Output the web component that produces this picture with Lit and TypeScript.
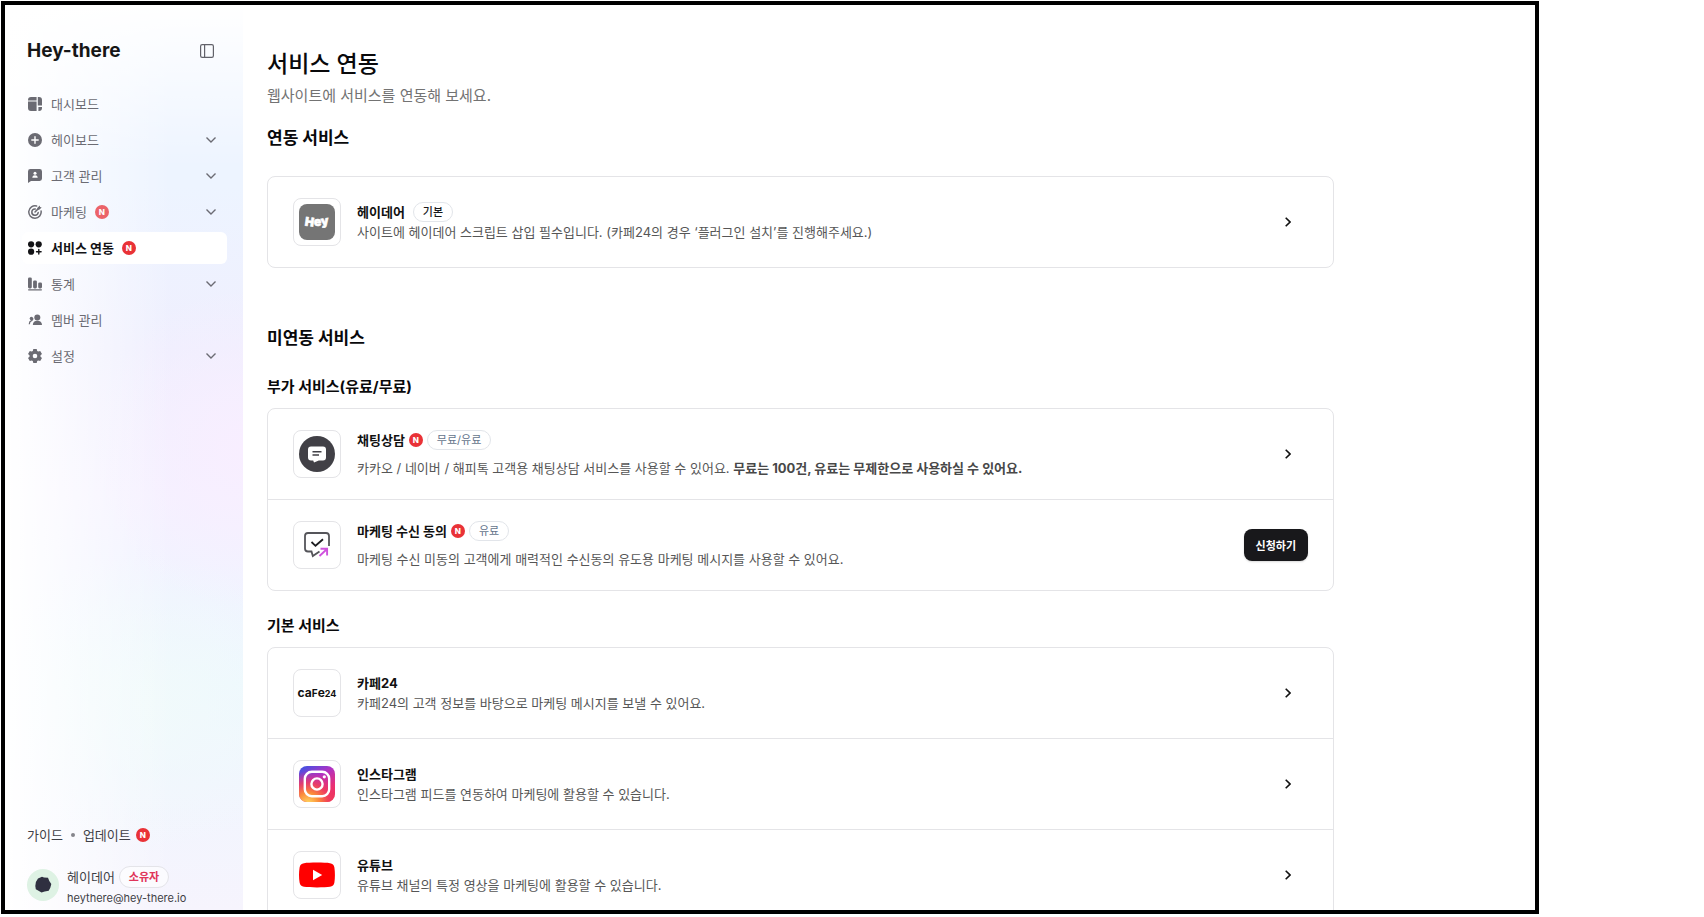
import { LitElement, html, svg, css, nothing, TemplateResult } from "lit";
import { customElement, property } from "lit/decorators.js";
import { classMap } from "lit/directives/class-map.js";

interface NavItem {
  label: string;
  icon: TemplateResult;
  isNew?: boolean;
  expandable?: boolean;
  active?: boolean;
}

interface Service {
  name: string;
  description: string;
  strong?: string;
  logo: TemplateResult;
  isNew?: boolean;
  tag?: string;
  tagDark?: boolean;
  action?: string;
}

const navIcons = {
  dashboard: svg`
    <path d="M3 0h5.6v3.4H0V3a3 3 0 0 1 3-3zM0 4.6h8.6V14H3a3 3 0 0 1-3-3z"/>
    <path d="M9.800 0H11a3 3 0 0 1 3 3v5.600H9.800zM10.400 10H14v1a3 3 0 0 1-3 3h-.6z"/>`,
  plus: svg`
    <circle cx="7" cy="7" r="7"/>
    <path d="M7 3.800v6.400M3.800 7h6.400" stroke="#fff" stroke-width="1.400" stroke-linecap="round"/>`,
  customer: svg`
    <path d="M2.400 0h9.200A2.400 2.400 0 0 1 14 2.400v7.200a2.400 2.400 0 0 1-2.400 2.400H3L0 14V2.400A2.400 2.400 0 0 1 2.400 0z"/>
    <circle cx="7" cy="4.300" r="1.500" fill="#fff"/>
    <path d="M4.300 8.700c0-1.700 1.200-2.500 2.700-2.500s2.700.8 2.700 2.500z" fill="#fff"/>`,
  target: svg`
    <g fill="none" stroke="currentColor" stroke-width="1.500" stroke-linecap="round">
      <path d="M8.600 1A6.200 6.200 0 1 0 13.100 6"/>
      <path d="M7.300 3.900A3.200 3.200 0 1 0 10.200 7.500"/>
      <path d="M7 7l3.600-3.600"/>
    </g>
    <path d="M9.300 2.900L11.700.4l.4 1.600 1.600.4-2.500 2.400H9.300z"/>`,
  services: svg`
    <circle cx="3.100" cy="3.300" r="3.100"/><circle cx="10.700" cy="3.300" r="3.100"/><circle cx="3.100" cy="10.700" r="3.100"/>
    <path d="M10.800 8.400v4.600M8.500 10.700h4.600" stroke="currentColor" stroke-width="1.400" stroke-linecap="round"/>`,
  stats: svg`
    <rect x="0" y="0.400" width="3.800" height="11" rx="1.400"/>
    <rect x="5.100" y="3.400" width="3.800" height="8" rx="1.400"/>
    <rect x="10.200" y="5.400" width="3.800" height="6" rx="1.400"/>
    <rect x="0" y="12.200" width="14" height="1.200" rx=".6"/>`,
  members: svg`
    <circle cx="9.300" cy="4.500" r="3"/>
    <path d="M4.800 11.900c0-2.600 1.700-4.200 4.500-4.200s4.700 1.600 4.700 4.200z"/>
    <circle cx="3.400" cy="5.500" r="1.700"/>
    <path d="M1.300 11.300c0-2 .7-3 2.200-3.600 1-.5 1.500-1.200 1.300-2.400" fill="none" stroke="currentColor" stroke-width="1.300"/>`,
  settings: svg`
    <path fill-rule="evenodd" d="M5.300 0h3.400l.5 1.900 1 .6 2-.6L14 4.900l-1.500 1.400v1.400L14 9.100l-1.800 3-2-.6-1 .6-.5 1.900H5.300l-.5-1.900-1-.6-2 .6L0 9.100l1.500-1.400V6.300L0 4.900l1.800-3 2 .6 1-.6zM7 4.700a2.300 2.300 0 1 0 0 4.600 2.300 2.300 0 0 0 0-4.600z"/>`,
};

const logos = {
  hey: html`<svg viewBox="0 0 36 36" aria-hidden="true">
    <rect width="36" height="36" rx="8" fill="#757575"/>
    <text x="5.500 15 22.500" y="21.500 22 21.500" rotate="8 0 -8" fill="#fff" stroke="#fff" stroke-width=".6"
      font-family="Inter, sans-serif" font-weight="900" font-size="12">Hey</text>
  </svg>`,
  chat: html`<svg viewBox="0 0 36 36" aria-hidden="true">
    <circle cx="18" cy="18" r="18" fill="#414046"/>
    <path d="M12 10.500h12a3 3 0 0 1 3 3v8a3 3 0 0 1-3 3h-4.200L15 26.500l-.8-2H12a3 3 0 0 1-3-3v-8a3 3 0 0 1 3-3z" fill="#fff"/>
    <path d="M13.500 15.800h9M13.500 19h6.500" stroke="#414046" stroke-width="1.500"/>
  </svg>`,
  consent: html`<svg viewBox="0 0 36 36" fill="none" aria-hidden="true">
    <path d="M30 19V9c0-2-1-3-3-3H9C7 6 6 7 6 9v12.500c0 2 1 3 3 3h3.500l1.300 4.500 6.700-4.500" stroke="#55555a" stroke-width="1.800"/>
    <path d="M12.500 15l4 3.800 7.500-6.600" stroke="#1d1d20" stroke-width="1.800"/>
    <path d="M20.500 29l7-6.500M21.500 21.800h6.600v6.600" stroke="#cf52dd" stroke-width="1.900"/>
  </svg>`,
  cafe: html`<svg class="wide" viewBox="0 0 46 36" aria-hidden="true">
    <text x="23" y="22" text-anchor="middle" fill="#111" font-family="Inter, sans-serif" font-weight="700">
      <tspan font-size="12">ca</tspan><tspan font-size="10">F</tspan><tspan font-size="12">e</tspan><tspan font-size="9">24</tspan>
    </text>
  </svg>`,
  instagram: html`<svg viewBox="0 0 36 36" aria-hidden="true">
    <defs>
      <linearGradient id="ig-base" x1=".2" y1="0" x2=".8" y2="1">
        <stop offset="0" stop-color="#4a4fe0"/><stop offset=".35" stop-color="#b032c4"/>
        <stop offset=".75" stop-color="#ee2f6e"/><stop offset="1" stop-color="#f0324f"/>
      </linearGradient>
      <radialGradient id="ig-glow" cx=".25" cy="1.050" r=".9">
        <stop offset="0" stop-color="#ffdc62"/><stop offset=".35" stop-color="#fb8a3a"/>
        <stop offset=".65" stop-color="#f0405a" stop-opacity=".8"/><stop offset="1" stop-color="#e03080" stop-opacity="0"/>
      </radialGradient>
    </defs>
    <rect width="36" height="36" rx="8" fill="url(#ig-base)"/>
    <rect width="36" height="36" rx="8" fill="url(#ig-glow)"/>
    <rect x="5.800" y="5.800" width="24.400" height="24.400" rx="7" fill="none" stroke="#fff" stroke-width="2.400"/>
    <circle cx="18" cy="18" r="5.600" fill="none" stroke="#fff" stroke-width="2.400"/>
    <circle cx="25.300" cy="10.800" r="1.600" fill="#fff"/>
  </svg>`,
  youtube: html`<svg viewBox="0 0 36 36" aria-hidden="true">
    <path d="M5 6.200c5-.8 21-.8 26 0 2.500.4 4 1.600 4.400 4.200.7 4.500.7 10.700 0 15.200-.4 2.600-1.900 3.800-4.400 4.200-5 .8-21 .8-26 0-2.500-.4-4-1.600-4.400-4.200-.8-4.500-.8-10.700 0-15.200C1 7.800 2.500 6.600 5 6.200z" fill="#f00"/>
    <path d="M14 12.800v10.400l9.200-5.200z" fill="#fff"/>
  </svg>`,
};

const NAV: NavItem[] = [
  { label: "대시보드", icon: navIcons.dashboard },
  { label: "헤이보드", icon: navIcons.plus, expandable: true },
  { label: "고객 관리", icon: navIcons.customer, expandable: true },
  { label: "마케팅", icon: navIcons.target, expandable: true, isNew: true },
  { label: "서비스 연동", icon: navIcons.services, isNew: true, active: true },
  { label: "통계", icon: navIcons.stats, expandable: true },
  { label: "멤버 관리", icon: navIcons.members },
  { label: "설정", icon: navIcons.settings, expandable: true },
];

const CONNECTED: Service[] = [
  {
    name: "헤이데어",
    description: "사이트에 헤이데어 스크립트 삽입 필수입니다. (카페24의 경우 ‘플러그인 설치’를 진행해주세요.)",
    logo: logos.hey,
    tag: "기본",
    tagDark: true,
  },
];

const ADDONS: Service[] = [
  {
    name: "채팅상담",
    description: "카카오 / 네이버 / 해피톡 고객용 채팅상담 서비스를 사용할 수 있어요. ",
    strong: "무료는 100건, 유료는 무제한으로 사용하실 수 있어요.",
    logo: logos.chat,
    isNew: true,
    tag: "무료/유료",
  },
  {
    name: "마케팅 수신 동의",
    description: "마케팅 수신 미동의 고객에게 매력적인 수신동의 유도용 마케팅 메시지를 사용할 수 있어요.",
    logo: logos.consent,
    isNew: true,
    tag: "유료",
    action: "신청하기",
  },
];

const BASIC: Service[] = [
  { name: "카페24", description: "카페24의 고객 정보를 바탕으로 마케팅 메시지를 보낼 수 있어요.", logo: logos.cafe },
  { name: "인스타그램", description: "인스타그램 피드를 연동하여 마케팅에 활용할 수 있습니다.", logo: logos.instagram },
  { name: "유튜브", description: "유튜브 채널의 특정 영상을 마케팅에 활용할 수 있습니다.", logo: logos.youtube },
];

@customElement("new-badge")
class NewBadge extends LitElement {
  static styles = css`
    :host {
      display: block;
      flex: none;
      width: 14px;
      height: 14px;
      border-radius: 7px;
      background: #e93237;
      color: #fff;
      font-size: 8px;
      line-height: 14px;
      font-weight: 800;
      text-align: center;
    }
  `;
  render() {
    return html`N`;
  }
}

@customElement("side-bar")
class SideBar extends LitElement {
  static styles = css`
    :host {
      display: flex;
      flex-direction: column;
      box-sizing: border-box;
      padding: 29px 16px 2px 17px;
      background:
        linear-gradient(to bottom, #fff 0, rgba(255, 255, 255, 0) 18%),
        linear-gradient(to right, #fff 0, rgba(255, 255, 255, 0) 70%),
        radial-gradient(150px 160px at 100% 49%, #f8eeff, rgba(248, 238, 255, 0)),
        radial-gradient(170px 150px at 60% 77%, #f1fafb, rgba(241, 250, 251, 0)),
        linear-gradient(to bottom, #edf4ff 20%, #efeffe 38%, #f4f1ff 54%, #f0f4ff 66%, #edf8fe 75%, #f1f5fe 86%, #f6f4fd);
      color: #6b6b73;
      font-size: 13px;
      line-height: 20px;
    }
    a, button { font: inherit; color: inherit; text-decoration: none; }
    button { padding: 0; border: 0; background: none; cursor: pointer; }
    .head {
      display: flex;
      align-items: center;
      justify-content: space-between;
      padding: 0 13px 0 5px;
      height: 34px;
    }
    .logo { color: #161616; font-size: 19px; font-weight: 700; line-height: 24px; }
    .head svg { display: block; }
    .nav { display: flex; flex-direction: column; gap: 4px; margin-top: 20px; }
    .item {
      display: flex;
      align-items: center;
      gap: 8px;
      height: 32px;
      padding: 0 11px 0 6px;
      border-radius: 6px;
    }
    .item.active { background: #fff; color: #131316; font-weight: 700; }
    .item.muted new-badge { opacity: 0.75; }
    .item svg { display: block; flex: none; }
    .icon { margin-right: 1px; }
    .chevron { margin-left: auto; }
    .links {
      display: flex;
      align-items: center;
      gap: 5px;
      margin-top: auto;
      padding-left: 5px;
      color: #3f3f46;
    }
    .dot { width: 4px; height: 4px; margin: 0 3px; border-radius: 2px; background: #85858c; }
    .profile { display: flex; align-items: center; gap: 8px; margin-top: 21px; padding-left: 5px; color: #3f3f46; }
    .profile > svg { display: block; flex: none; margin-bottom: 4px; }
    .who { display: flex; align-items: center; gap: 4px; }
    .role {
      box-sizing: border-box;
      height: 22px;
      padding: 0 9px;
      border: 1px solid #e4e4e9;
      border-radius: 11px;
      background: rgba(255, 255, 255, 0.6);
      color: #e0355a;
      font-size: 11px;
      font-weight: 700;
    }
    .mail { display: block; font-size: 11px; }
  `;

  render() {
    return html`
      <div class="head">
        <a class="logo" href="#">Hey-there</a>
        <button aria-label="사이드바 접기">
          <svg width="14" height="14" viewBox="0 0 14 14" fill="none" stroke="#62626a" stroke-width="1.200">
            <rect x=".6" y=".6" width="12.800" height="12.800" rx="1.600"/><path d="M4.600.6v12.800"/>
          </svg>
        </button>
      </div>
      <nav class="nav">
        ${NAV.map(
          (item) => html`<a
            href="#"
            class=${classMap({ item: true, active: !!item.active, muted: !item.active })}
          >
            <svg class="icon" width="14" height="14" viewBox="0 0 14 14" fill="currentColor" aria-hidden="true">${item.icon}</svg>
            <span>${item.label}</span>
            ${item.isNew ? html`<new-badge></new-badge>` : nothing}
            ${item.expandable
              ? html`<svg class="chevron" width="10" height="6" viewBox="0 0 10 6" fill="none"
                  stroke="currentColor" stroke-width="1.400" aria-hidden="true"><path d="M.5.500L5 5l4.500-4.500"/></svg>`
              : nothing}
          </a>`
        )}
      </nav>
      <div class="links">
        <a href="#">가이드</a><span class="dot"></span><a href="#">업데이트</a><new-badge></new-badge>
      </div>
      <div class="profile">
        <svg width="32" height="32" viewBox="0 0 32 32" aria-hidden="true">
          <circle cx="16" cy="16" r="16" fill="#def2e4"/>
          <path d="M11 9.500l4-1.700 2 .7 4 .2 1.300 3.300 2 3-1 3.800-1.600 3-4 .8-3.200 1-3-1.800-2.700-1.500L8.300 17l.6-4z" fill="#2f3040"/>
        </svg>
        <div>
          <div class="who"><span>헤이데어</span><span class="role">소유자</span></div>
          <span class="mail">heythere@hey-there.io</span>
        </div>
      </div>
    `;
  }
}

@customElement("service-card")
class ServiceCard extends LitElement {
  @property({ attribute: false }) services: Service[] = [];
  @property({ type: Boolean, reflect: true }) spacious = false;

  static styles = css`
    :host { display: block; border: 1px solid #e4e4e7; border-radius: 8px; background: #fff; }
    .row {
      display: flex;
      align-items: center;
      gap: 16px;
      box-sizing: border-box;
      min-height: 90px;
      padding: 20px 25px;
    }
    .row + .row { border-top: 1px solid #e4e4e7; min-height: 91px; }
    .logo {
      display: grid;
      place-items: center;
      flex: none;
      box-sizing: border-box;
      width: 48px;
      height: 48px;
      border: 1px solid #e4e4e7;
      border-radius: 8px;
    }
    .logo svg { display: block; width: 36px; height: 36px; }
    .logo svg.wide { width: 46px; }
    .text { display: flex; flex-direction: column; flex: 1; min-width: 0; }
    :host([spacious]) .text { gap: 8px; }
    .title { display: flex; align-items: center; gap: 8px; height: 20px; }
    :host([spacious]) .title { gap: 4px; }
    h4 { margin: 0; color: #111; font-size: 13px; line-height: 20px; font-weight: 700; }
    p { margin: 0; color: #565656; font-size: 13px; line-height: 20px; }
    b { color: #484848; }
    .tag {
      box-sizing: border-box;
      height: 20px;
      padding: 0 9px;
      border: 1px solid #e2e5ea;
      border-radius: 10px;
      color: #64748b;
      font-size: 11px;
      line-height: 18px;
    }
    .tag.dark { color: #18181b; font-weight: 500; }
    .open { display: grid; place-items: center; width: 40px; height: 40px; padding: 0; border: 0; background: none; cursor: pointer; }
    .apply {
      height: 32px;
      padding: 0 12px;
      border: 0;
      border-radius: 8px;
      background: #18181b;
      box-shadow: 0 1px 2px rgba(0, 0, 0, 0.15);
      color: #fff;
      font: inherit;
      font-size: 11px;
      font-weight: 700;
      cursor: pointer;
    }
  `;

  render() {
    return this.services.map(
      (s) => html`<div class="row">
        <div class="logo">${s.logo}</div>
        <div class="text">
          <div class="title">
            <h4>${s.name}</h4>
            ${s.isNew ? html`<new-badge></new-badge>` : nothing}
            ${s.tag ? html`<span class=${classMap({ tag: true, dark: !!s.tagDark })}>${s.tag}</span>` : nothing}
          </div>
          <p>${s.description}${s.strong ? html`<b>${s.strong}</b>` : nothing}</p>
        </div>
        ${s.action
          ? html`<button class="apply">${s.action}</button>`
          : html`<button class="open" aria-label=${s.name}>
              <svg width="6" height="10" viewBox="0 0 6 10" fill="none" stroke="#111" stroke-width="1.600"><path d="M.7.700L5 5 .7 9.300"/></svg>
            </button>`}
      </div>`
    );
  }
}

@customElement("app-root")
class AppRoot extends LitElement {
  static styles = css`
    :host {
      display: block;
      box-sizing: border-box;
      height: 100vh;
      padding: 1px 165px 3px 1px;
      background: #fff;
      font-family: Inter, "Noto Sans CJK KR", sans-serif;
    }
    .frame {
      display: flex;
      box-sizing: border-box;
      height: 100%;
      border: 4px solid #000;
      overflow: hidden;
    }
    side-bar { flex: none; width: 238px; }
    main { flex: 1; min-width: 0; overflow: hidden; padding: 43px 24px 0; }
    .content { max-width: 1067px; }
    h1, h2, h3, p { margin: 0; color: #09090b; }
    h1 { font-size: 23px; line-height: 32px; font-weight: 500; }
    .lead { margin-top: 4px; color: #737373; font-size: 15px; line-height: 24px; }
    h2 { margin: 18px 0 26px; font-size: 17px; line-height: 24px; font-weight: 700; }
    h2.second { margin: 58px 0 27px; }
    h3 { margin: 25px 0 11px; font-size: 15px; line-height: 20px; font-weight: 700; }
  `;

  render() {
    return html`
      <div class="frame">
        <side-bar></side-bar>
        <main>
          <div class="content">
            <h1>서비스 연동</h1>
            <p class="lead">웹사이트에 서비스를 연동해 보세요.</p>
            <h2>연동 서비스</h2>
            <service-card .services=${CONNECTED}></service-card>
            <h2 class="second">미연동 서비스</h2>
            <h3>부가 서비스(유료/무료)</h3>
            <service-card spacious .services=${ADDONS}></service-card>
            <h3>기본 서비스</h3>
            <service-card .services=${BASIC}></service-card>
          </div>
        </main>
      </div>
    `;
  }
}
